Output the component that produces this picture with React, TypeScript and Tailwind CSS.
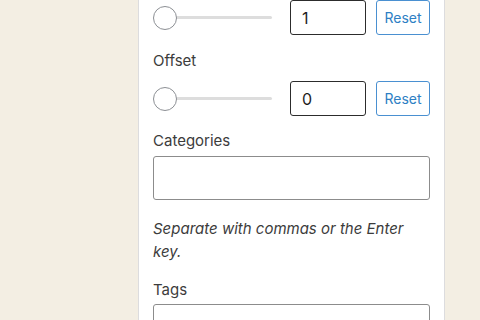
const FONT = 'font-["Inter","Noto_Sans",sans-serif]'

function SliderRow({ value }: { value: string }) {
  return (
    <div className="flex items-center h-[35px]">
      {/* Range control */}
      <div className="relative flex items-center w-[119px] h-[24px]">
        <div className="ml-[12px] h-[3px] w-[107px] rounded-full bg-[#dddddd]" />
        <div className="absolute left-0 top-0 h-[24px] w-[24px] rounded-full border-[1.5px] border-[#8c8f94] bg-white" />
      </div>
      <div className="ml-[18px] flex h-[35px] w-[76px] items-center rounded-[3px] border border-[#2c2c2c] px-[11px] text-[16px] text-[#1e1e1e]">
        {value}
      </div>
      <button className="ml-[10px] h-[35px] w-[54px] rounded-[3px] border border-[#4a90d1] bg-white text-[14px] text-[#2e7fc4]">
        Reset
      </button>
    </div>
  )
}

export default function App() {
  return (
    <div className={`flex h-[320px] w-[480px] overflow-hidden bg-[#f3eee3] ${FONT}`}>
      <div className="ml-[138px] w-[307px] shrink-0 border-x border-[#dcdcde] bg-white px-[14px]">
        <SliderRow value="1" />

        <p className="mt-[16px] text-[15px] leading-[20px] text-[#3c3c3c]">Offset</p>
        <div className="mt-[10px]">
          <SliderRow value="0" />
        </div>

        <p className="mt-[15px] text-[15px] leading-[20px] text-[#3c3c3c]">Categories</p>
        <div className="mt-[5px] h-[44px] w-[277px] rounded-[3px] border border-[#8c8c8c]" />

        <p className="mt-[17px] text-[15px] italic leading-[23px] text-[#3c3c3c]">
          Separate with commas or the Enter key.
        </p>

        <p className="mt-[17px] text-[15px] leading-[20px] text-[#3c3c3c]">Tags</p>
        <div className="mt-[4px] h-[44px] w-[277px] rounded-[3px] border border-[#8c8c8c]" />
      </div>
    </div>
  )
}
